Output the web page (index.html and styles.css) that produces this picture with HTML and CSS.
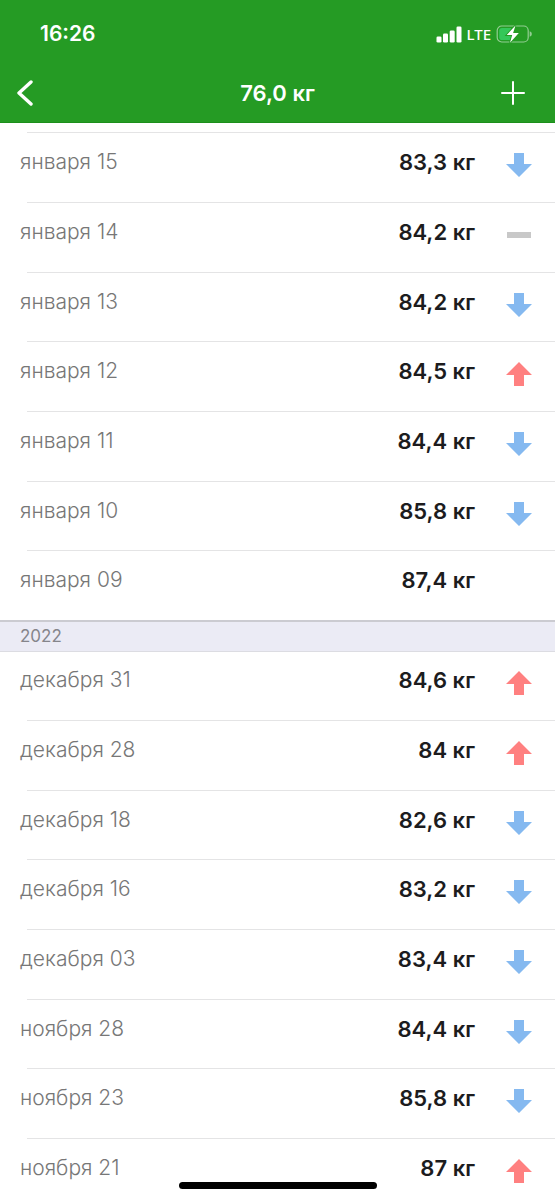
FILE: index.html
```html
<!DOCTYPE html>
<html lang="ru">
	<head>
		<meta charset="utf-8">
		<meta name="viewport" content="width=device-width, initial-scale=1">
		<title>76,0 кг</title>
		<link rel="stylesheet" href="styles.css">
	</head>
	<body>
		<svg width="0" height="0" class="symbols">
			<symbol id="down" viewBox="0 0 26 24"><path d="M8 0h10v11h8L13 24 0 11h8z"/></symbol>
			<symbol id="up" viewBox="0 0 26 24"><path d="M13 0l13 13h-8v11H8V13H0z"/></symbol>
			<symbol id="same" viewBox="0 0 26 24"><path d="M1 9h24v6H1z"/></symbol>
		</svg>

		<header>
			<div class="status">
				<time>16:26</time>
				<div class="indicators">
					<svg class="signal" width="26" height="17" viewBox="0 0 26 17">
						<rect x="0.5" y="10.5" width="5" height="6" rx="1.3"/>
						<rect x="7" y="7.5" width="5" height="9" rx="1.3"/>
						<rect x="13.7" y="4.5" width="5" height="12" rx="1.3"/>
						<rect x="20.5" y="0.5" width="5" height="16" rx="1.3"/>
					</svg>
					<span class="network">LTE</span>
					<svg class="battery" width="36" height="18" viewBox="0 0 36 18">
						<rect x="1.2" y="1" width="31" height="16" rx="4.5" fill="none" stroke="#fff" stroke-opacity=".5" stroke-width="1.2"/>
						<path d="M33.7 6.2q2.2.8 2.2 2.8t-2.2 2.8z" fill="#fff" fill-opacity=".5"/>
						<path d="M6 3H15v12H6Q3.200 15 3.200 12.200V5.800Q3.200 3 6 3z" fill="#34c759"/>
						<path d="M19.500 .4L10.700 10h5.500l-2.200 7.700L22.800 8h-5.700z" fill="#fff" stroke="#259b24" stroke-width="1.800" paint-order="stroke"/>
					</svg>
				</div>
			</div>
			<nav>
				<button type="button" aria-label="Назад">
					<svg width="18" height="26" viewBox="0 0 18 26"><path d="M15 2L3 13l12 11" stroke-width="3.400"/></svg>
				</button>
				<h1>76,0 кг</h1>
				<button type="button" aria-label="Добавить">
					<svg width="24" height="24" viewBox="0 0 24 24"><path d="M12 1v22M1 12h22" stroke-width="2"/></svg>
				</button>
			</nav>
		</header>

		<main>
			<ul class="first">
				<li><span>января 15</span><b>83,3 кг</b><svg class="down"><use href="#down"/></svg></li>
				<li><span>января 14</span><b>84,2 кг</b><svg class="same"><use href="#same"/></svg></li>
				<li><span>января 13</span><b>84,2 кг</b><svg class="down"><use href="#down"/></svg></li>
				<li><span>января 12</span><b>84,5 кг</b><svg class="up"><use href="#up"/></svg></li>
				<li><span>января 11</span><b>84,4 кг</b><svg class="down"><use href="#down"/></svg></li>
				<li><span>января 10</span><b>85,8 кг</b><svg class="down"><use href="#down"/></svg></li>
				<li><span>января 09</span><b>87,4 кг</b><svg></svg></li>
			</ul>

			<h2>2022</h2>
			<ul>
				<li><span>декабря 31</span><b>84,6 кг</b><svg class="up"><use href="#up"/></svg></li>
				<li><span>декабря 28</span><b>84 кг</b><svg class="up"><use href="#up"/></svg></li>
				<li><span>декабря 18</span><b>82,6 кг</b><svg class="down"><use href="#down"/></svg></li>
				<li><span>декабря 16</span><b>83,2 кг</b><svg class="down"><use href="#down"/></svg></li>
				<li><span>декабря 03</span><b>83,4 кг</b><svg class="down"><use href="#down"/></svg></li>
				<li><span>ноября 28</span><b>84,4 кг</b><svg class="down"><use href="#down"/></svg></li>
				<li><span>ноября 23</span><b>85,8 кг</b><svg class="down"><use href="#down"/></svg></li>
				<li><span>ноября 21</span><b>87 кг</b><svg class="up"><use href="#up"/></svg></li>
			</ul>
		</main>

		<div class="home-bar"></div>
	</body>
</html>
```
FILE: styles.css
```css
* {
	box-sizing: border-box;
}
body {
	margin: 0;
	height: 100vh;
	display: flex;
	flex-direction: column;
	overflow: hidden;
	font-family: Inter, "Noto Sans", sans-serif;
	font-size: 22px;
	line-height: 28px;
	color: #1c1c1e;
	background-color: #fff;
}
.symbols {
	position: absolute;
}

/* header */
header {
	flex: none;
	color: #fff;
	background-color: #259b24;
	border-bottom: 1px solid #1c8f1b;
}
.status {
	display: flex;
	justify-content: space-between;
	align-items: center;
	padding: 20px 23px 0 40px;
}
.status time {
	font-size: 21px;
	font-weight: 600;
}
.indicators {
	display: flex;
	align-items: center;
	gap: 5px;
}
.signal {
	fill: #fff;
}
.network {
	font-family: "Noto Sans", sans-serif;
	font-size: 15px;
	font-weight: 500;
}
nav {
	display: grid;
	grid-template-columns: 1fr auto 1fr;
	align-items: center;
	height: 74px;
	padding: 16px 16px 0;
}
nav h1 {
	margin: 0;
	font-size: 22px;
	font-weight: 600;
}
nav button {
	display: flex;
	padding: 0;
	border: none;
	background: none;
	cursor: pointer;
}
nav button:last-child {
	justify-content: flex-end;
	padding-right: 14px;
}
nav svg {
	fill: none;
	stroke: #fff;
	stroke-linecap: round;
	stroke-linejoin: round;
}

/* weight list */
main {
	flex: 1;
	min-height: 0;
	overflow-y: auto;
	scrollbar-width: none;
}
ul {
	margin: 0;
	padding: 0;
	list-style: none;
}
ul.first {
	padding-top: 9px;
}
li {
	display: flex;
	align-items: flex-start;
	height: 70px;
	padding: 16px 23px 0 20px;
	background: linear-gradient(#e4e4e5, #e4e4e5) 27px 0 / 100% 1px no-repeat;
}
li:nth-child(3n) {
	height: 69px;
}
h2 + ul li:first-child {
	background: none;
}
li span {
	flex: 1;
	font-size: 21px;
	font-weight: 300;
	color: #777;
}
li b {
	font-weight: 600;
}
li svg {
	width: 26px;
	height: 24px;
	margin: 5px 0 0 31px;
}
.down {
	fill: #85b9f0;
}
.up {
	fill: #ff8080;
}
.same {
	fill: #c8c8c8;
}
h2 {
	margin: 0 0 -2px;
	padding: 0 20px;
	border-top: 2px solid #cbcbd1;
	border-bottom: 1px solid #dcdce2;
	font-size: 17px;
	font-weight: 400;
	line-height: 29px;
	color: #85858b;
	background-color: #ebebf5;
}

.home-bar {
	position: fixed;
	bottom: 11px;
	left: 50%;
	width: 198px;
	height: 7px;
	margin-left: -99px;
	border-radius: 4px;
	background-color: #000;
}
```
